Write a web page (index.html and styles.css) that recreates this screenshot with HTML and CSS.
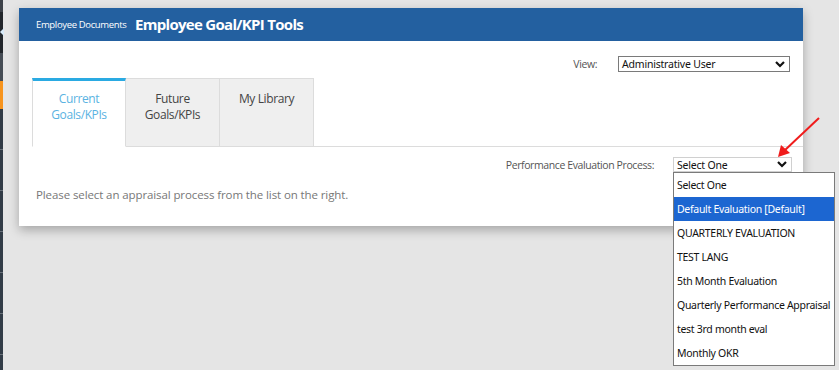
FILE: index.html
```html
<!DOCTYPE html>
<html lang="en">
<head>
    <meta charset="UTF-8">
    <title>Employee Goal/KPI Tools</title>
    <link rel="stylesheet" href="styles.css">
</head>
<body>
    <div class="sidebar">
        <div class="sb-top"></div>
        <div class="sb-dark"><span class="sb-notch"></span></div>
        <div class="sb-grey"></div>
        <div class="sb-orange"></div>
        <div class="sb-item"></div>
        <div class="sb-item"></div>
        <div class="sb-item"></div>
        <div class="sb-item"></div>
        <div class="sb-item"></div>
        <div class="sb-item"></div>
    </div>

    <div class="main">
        <div class="card">
            <div class="card-header">
                <span class="crumb">Employee Documents</span>
                <span class="title">Employee Goal/KPI Tools</span>
            </div>
            <div class="card-body">
                <div class="view-row">
                    <span class="label">View:</span>
                    <div class="select select-view">
                        <span>Administrative User</span>
                        <svg class="chev" viewBox="0 0 10 7"><polyline points="1,1 5,5 9,1"/></svg>
                    </div>
                </div>

                <div class="tabs">
                    <div class="tab active"><span>Current</span><span>Goals/KPIs</span></div>
                    <div class="tab"><span>Future</span><span>Goals/KPIs</span></div>
                    <div class="tab"><span>My Library</span></div>
                </div>

                <div class="tab-content">
                    <div class="process-row">
                        <span class="label">Performance Evaluation Process:</span>
                        <div class="select select-process">
                            <span>Select One</span>
                            <svg class="chev" viewBox="0 0 10 7"><polyline points="1,1 5,5 9,1"/></svg>
                            <ul class="options">
                                <li>Select One</li>
                                <li class="hl">Default Evaluation [Default]</li>
                                <li>QUARTERLY EVALUATION</li>
                                <li>TEST LANG</li>
                                <li>5th Month Evaluation</li>
                                <li>Quarterly Performance Appraisal</li>
                                <li>test 3rd month eval</li>
                                <li>Monthly OKR</li>
                            </ul>
                        </div>
                    </div>
                    <p class="hint">Please select an appraisal process from the list on the right.</p>
                </div>
            </div>
        </div>
    </div>

    <svg class="pointer" width="60" height="60" viewBox="0 0 60 60">
        <line x1="49" y1="3" x2="14" y2="36" stroke="#f01c1c" stroke-width="2"/>
        <polygon points="8,42 11,30 20,38" fill="#f01c1c"/>
    </svg>
</body>
</html>
```

FILE: styles.css
```css
body {
    margin: 0;
    background-color: #e5e5e5;
    font-family: "Open Sans", Arial, sans-serif;
    display: flex;
    height: 370px;
    overflow: hidden;
}
.sidebar {
    width: 3px;
    background-color: #323c47;
    display: flex;
    flex-direction: column;
}
.sb-top { height: 12px; background-color: #3d4249; }
.sb-dark { height: 41px; background-color: #22262b; position: relative; }
.sb-notch {
    position: absolute;
    left: 0;
    top: 16px;
    width: 0;
    height: 0;
    border-top: 4px solid transparent;
    border-bottom: 4px solid transparent;
    border-right: 4px solid #d7e9f7;
}
.sb-grey { height: 28px; background-color: #464d55; }
.sb-orange { height: 28px; background-color: #f7941d; }
.sb-item {
    height: 40px;
    border-bottom: 1px solid #69717a;
}
.main {
    padding: 8px 0 0 16px;
}
.card {
    width: 784px;
    background-color: #fff;
    box-shadow: 0 4px 10px rgba(0, 0, 0, 0.28);
}
.card-header {
    height: 33px;
    background-color: #2360a0;
    color: #fff;
    display: flex;
    align-items: center;
    padding-left: 17px;
}
.crumb {
    font-size: 9.5px;
    letter-spacing: -0.35px;
    width: 99px;
}
.title {
    font-size: 15px;
    font-weight: bold;
    letter-spacing: -0.7px;
    padding-bottom: 2px;
}
.card-body {
    padding: 15px 0 0 13px;
}
.label {
    font-size: 10.5px;
    letter-spacing: -0.4px;
    color: #555;
}
.view-row {
    display: flex;
    justify-content: flex-end;
    align-items: center;
    padding-right: 13px;
    gap: 21px;
}
.select {
    position: relative;
    box-sizing: border-box;
    height: 16px;
    border: 1px solid #7a7a7a;
    background-color: #fff;
    font-family: "Noto Sans", "Open Sans", sans-serif;
    font-size: 10.5px;
    letter-spacing: -0.2px;
    color: #111;
    display: flex;
    align-items: center;
    justify-content: space-between;
    padding: 0 4px 0 3px;
}
.select-view {
    width: 172px;
}
.chev {
    width: 10px;
    height: 7px;
    fill: none;
    stroke: #111;
    stroke-width: 2.2;
}
.tabs {
    display: flex;
    margin-top: 6px;
    border-bottom: 1px solid #dcdcdc;
}
.tab {
    box-sizing: border-box;
    width: 94px;
    height: 69px;
    margin-bottom: -1px;
    background-color: #efefef;
    border: 1px solid #dcdcdc;
    border-left: 0;
    display: flex;
    flex-direction: column;
    align-items: center;
    font-size: 12px;
    line-height: 16px;
    letter-spacing: -0.4px;
    color: #444;
    padding-top: 12px;
}
.tab.active {
    background-color: #fff;
    border-left: 1px solid #dcdcdc;
    border-top: 3px solid #2aaae2;
    border-bottom-color: #fff;
    color: #5ab3e2;
    padding-top: 10px;
}
.tab-content {
    padding: 10px 0 0 4px;
    height: 69px;
}
.process-row {
    display: flex;
    justify-content: flex-end;
    align-items: center;
    padding-right: 11px;
    gap: 19px;
}
.select-process {
    width: 119px;
    height: 15px;
    border-color: #d0d0d0;
}
.options {
    position: absolute;
    top: 14px;
    left: -1px;
    z-index: 2;
    width: 162px;
    box-sizing: border-box;
    margin: 0;
    padding: 0;
    list-style: none;
    border: 1px solid #7a7a7a;
    background-color: #fff;
    color: #111;
}
.options li {
    height: 24px;
    line-height: 24px;
    padding-left: 3px;
    white-space: nowrap;
    font-size: 10.5px;
    letter-spacing: -0.3px;
}
.options li.hl {
    background-color: #1c66d1;
    color: #fff;
}
.hint {
    margin: 15px 0 0;
    font-size: 11.5px;
    letter-spacing: -0.1px;
    color: #777;
}
.pointer {
    position: absolute;
    left: 770px;
    top: 115px;
}
```
